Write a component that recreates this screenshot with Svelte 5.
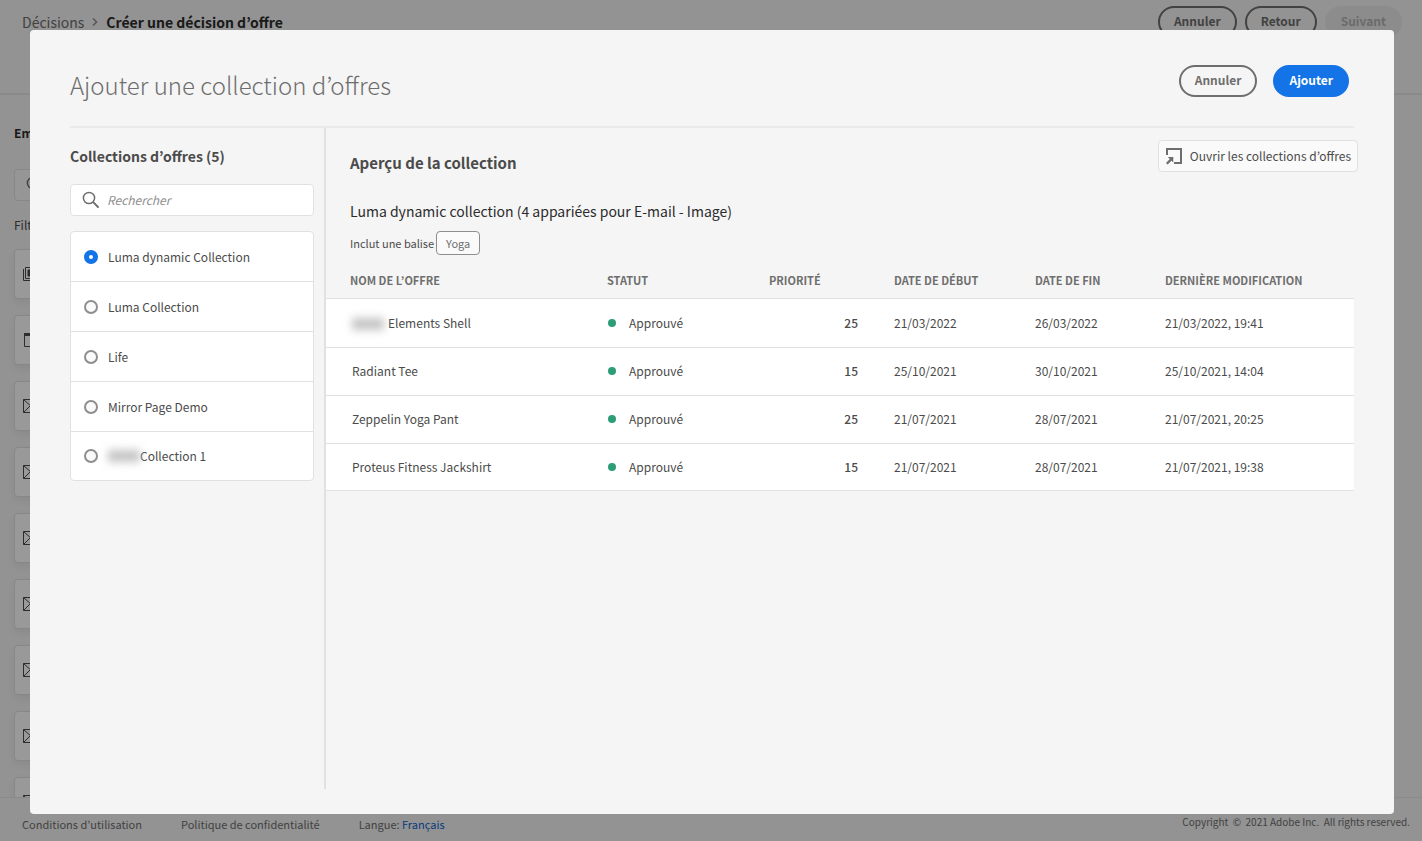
<script>
  const collections = [
    { id: 'dynamic', label: 'Luma dynamic Collection' },
    { id: 'luma', label: 'Luma Collection' },
    { id: 'life', label: 'Life' },
    { id: 'mirror', label: 'Mirror Page Demo' },
    { id: 'masked', label: 'Collection 1', masked: true },
  ];
  const offers = [
    { name: 'Elements Shell', masked: true, priority: 25, start: '21/03/2022', end: '26/03/2022', modified: '21/03/2022, 19:41' },
    { name: 'Radiant Tee', priority: 15, start: '25/10/2021', end: '30/10/2021', modified: '25/10/2021, 14:04' },
    { name: 'Zeppelin Yoga Pant', priority: 25, start: '21/07/2021', end: '28/07/2021', modified: '21/07/2021, 20:25' },
    { name: 'Proteus Fitness Jackshirt', priority: 15, start: '21/07/2021', end: '28/07/2021', modified: '21/07/2021, 19:38' },
  ];
  const placements = ['image', 'web', 'mail', 'mail', 'mail', 'mail', 'mail', 'mail', 'mail'];
  let selected = $state('dynamic');
  let query = $state('');
</script>

{#snippet magnifier()}
  <svg class="magnifier" viewBox="0 0 18 18" width="18" height="18" aria-hidden="true">
    <circle cx="7" cy="7" r="5.6" fill="none" stroke="currentColor" stroke-width="1.5" />
    <path d="M11.2 11.2 16 16" stroke="currentColor" stroke-width="1.9" stroke-linecap="round" />
  </svg>
{/snippet}

<div class="page">
  <header class="topbar">
    <nav class="crumbs">
      <a href="#decisions">Décisions</a>
      <svg viewBox="0 0 6 10" width="6" height="10" aria-hidden="true"><path d="M1 1.5 4.6 5 1 8.5" fill="none" stroke="#8e8e8e" stroke-width="1.5" /></svg>
      <strong>Créer une décision d’offre</strong>
    </nav>
    <div class="top-actions">
      <button class="pill">Annuler</button>
      <button class="pill">Retour</button>
      <button class="pill off" disabled>Suivant</button>
    </div>
  </header>
  <main class="back">
    <h2>Emplacements</h2>
    <div class="back-search">{@render magnifier()}</div>
    <p>Filtres</p>
    <ul>
      {#each placements as kind}
        <li>
          <svg viewBox="0 0 18 14" width="18" height="14" fill="none" stroke="#4b4b4b" stroke-width="1" aria-hidden="true">
            {#if kind === 'image'}
              <path d="M.5 2v11.5H15M2.500.5h15v11h-15z" /><path d="M5 3h10v6H5z" fill="#4b4b4b" />
            {:else if kind === 'web'}
              <path d="M1.500.5h15v13h-15z" /><path d="M1 1.500h16" stroke-width="3" />
            {:else}
              <path d="M.5.5h17v13H.5zM.5.5 9 8l8.500-7.500M.5 13.500 7 7M17.500 13.500 11 7" />
            {/if}
          </svg>
        </li>
      {/each}
    </ul>
  </main>
  <footer class="bottom">
    <a href="#terms">Conditions d’utilisation</a>
    <a href="#privacy">Politique de confidentialité</a>
    <span>Langue: <a class="lang" href="#language">Français</a></span>
    <small>Copyright &nbsp;©&nbsp; 2021 Adobe Inc. &nbsp;All rights reserved.</small>
  </footer>
</div>

<div class="overlay">
  <div class="dialog" role="dialog" aria-modal="true" aria-labelledby="dialog-title">
    <header class="dialog-head">
      <h1 id="dialog-title">Ajouter une collection d’offres</h1>
      <div class="dialog-actions">
        <button class="pill">Annuler</button>
        <button class="pill primary">Ajouter</button>
      </div>
    </header>
    <div class="columns">
      <aside>
        <h2>Collections d’offres (5)</h2>
        <label class="search">
          {@render magnifier()}
          <input type="search" placeholder="Rechercher" aria-label="Rechercher" bind:value={query} />
        </label>
        <div class="list" role="radiogroup" aria-label="Collections d’offres">
          {#each collections as item}
            <label>
              <input type="radio" name="collection" value={item.id} bind:group={selected} />
              <span class="label">{#if item.masked}<i class="mask"></i>{/if}{item.label}</span>
            </label>
          {/each}
        </div>
      </aside>
      <section>
        <div class="preview-head">
          <h2>Aperçu de la collection</h2>
          <button class="open">
            <svg viewBox="0 0 18 18" width="18" height="18" aria-hidden="true">
              <path d="M2 8V2h14v14H9" fill="none" stroke="#6e6e6e" stroke-width="2" />
              <path d="M2.800 10H8.300v5.500L6.500 13.700 2.600 17.400 1 15.900 4.800 12z" fill="#6e6e6e" />
            </svg>
            Ouvrir les collections d’offres
          </button>
        </div>
        <h3>Luma dynamic collection (4 appariées pour E-mail - Image)</h3>
        <div class="tags">Inclut une balise <span class="tag">Yoga</span></div>
        <table>
          <colgroup><col /><col class="c-status" /><col class="c-priority" /><col class="c-start" /><col class="c-end" /><col class="c-modified" /></colgroup>
          <thead>
            <tr><th>Nom de l’offre</th><th>Statut</th><th>Priorité</th><th>Date de début</th><th>Date de fin</th><th>Dernière modification</th></tr>
          </thead>
          <tbody>
            {#each offers as offer}
              <tr>
                <td>{#if offer.masked}<i class="mask"></i>{/if}{offer.name}</td>
                <td><i class="dot"></i>Approuvé</td>
                <td class="num">{offer.priority}</td>
                <td>{offer.start}</td>
                <td>{offer.end}</td>
                <td>{offer.modified}</td>
              </tr>
            {/each}
          </tbody>
        </table>
      </section>
    </div>
  </div>
</div>

<style>
  :global(body) { margin: 0; overflow: hidden; }
  .page, .overlay { font-family: "Noto Sans CJK KR", "Noto Sans", sans-serif; font-size: 12px; line-height: 20px; color: #4b4b4b; box-sizing: border-box; }
  .page *, .overlay * { box-sizing: border-box; }
  h1, h2, h3, p, ul { margin: 0; padding: 0; }
  button, input { font: inherit; color: inherit; }
  a { color: inherit; text-decoration: none; }

  .page { height: 100vh; display: flex; flex-direction: column; background: #f5f5f5; overflow: hidden; }
  .topbar { display: flex; justify-content: space-between; align-items: flex-start; height: 95px; flex: none; padding: 6px 20px 0 22px; border-bottom: 2px solid #e6e6e6; }
  .crumbs { display: flex; align-items: center; gap: 8px; height: 32px; font-size: 14px; color: #6e6e6e; }
  .crumbs strong { color: #2c2c2c; }
  .top-actions { display: flex; gap: 8px; }
  .pill { height: 32px; padding: 0 14px 2px; border: 2px solid #6e6e6e; border-radius: 16px; background: transparent; color: #6e6e6e; font-weight: 700; line-height: 20px; }
  .pill.off { border-color: #eaeaea; background: #eaeaea; color: #b3b3b3; }
  .pill.primary { border-color: #1473e6; background: #1473e6; color: #fff; }

  .back { flex: 1; min-height: 0; overflow: hidden; width: 320px; padding: 28px 14px 0; }
  .back h2 { font-size: 12px; line-height: 20px; color: #2c2c2c; }
  .back-search { display: flex; align-items: center; height: 32px; margin: 26px 0 14px; padding-left: 11px; border: 1px solid #e1e1e1; border-radius: 4px; background: #fafafa; }
  .back ul { display: grid; gap: 16px; margin-top: 14px; list-style: none; }
  .back li { display: flex; align-items: center; height: 50px; padding-left: 8px; border: 1px solid #e1e1e1; border-radius: 4px; background: #fff; box-shadow: 0 4px 8px rgba(0, 0, 0, 0.06); }
  .bottom { display: flex; align-items: center; gap: 39px; height: 44px; flex: none; padding: 9px 12px 0 22px; border-top: 1px solid #e6e6e6; font-size: 11px; color: #6e6e6e; }
  .bottom .lang { color: #0d66d0; }
  .bottom small { margin-left: auto; padding-bottom: 4px; font-size: 10px; line-height: 20px; }

  .overlay { position: fixed; inset: 0; display: flex; padding: 30px 28px 27px 30px; background: rgba(0, 0, 0, 0.4); }
  .dialog { flex: 1; min-width: 0; display: flex; flex-direction: column; padding: 0 40px 25px; border-radius: 4px; background: #f5f5f5; }
  .dialog-head { display: flex; justify-content: space-between; align-items: flex-start; padding: 35px 5px 0 0; height: 98px; border-bottom: 2px solid #eaeaea; }
  .dialog-head h1 { padding-top: 4px; font-size: 24px; line-height: 32px; font-weight: 300; color: #6e6e6e; }
  .dialog-actions { display: flex; gap: 16px; }
  .columns { flex: 1; min-height: 0; display: grid; grid-template-columns: 256px minmax(0, 1fr); }
  aside { padding: 18px 10px 0 0; border-right: 2px solid #e1e1e1; }
  aside h2 { font-size: 14px; line-height: 20px; font-weight: 700; }
  .magnifier { flex: none; color: #6e6e6e; }
  .search { display: flex; align-items: center; gap: 7px; height: 32px; margin: 18px 0 15px; padding: 0 11px; border: 1px solid #e1e1e1; border-radius: 4px; background: #fff; }
  .search input { flex: 1; min-width: 0; padding: 0; border: 0; outline: 0; background: transparent; }
  .search input::placeholder { color: #8e8e8e; font-style: italic; opacity: 1; }
  .list { border: 1px solid #e1e1e1; border-radius: 4px; background: #fff; }
  .list label { display: flex; align-items: center; gap: 10px; height: 50px; padding-left: 13px; border-bottom: 1px solid #e1e1e1; }
  .list label:last-child { height: 48px; border-bottom: 0; }
  .list input { appearance: none; width: 14px; height: 14px; margin: 0; border: 2px solid #8e8e8e; border-radius: 50%; background: #fafafa; }
  .list input:checked { border: 5px solid #1473e6; background: #fff; }
  .label { display: flex; align-items: center; }
  .mask { display: inline-block; width: 32px; height: 12px; background: #c4c4c4; filter: blur(4px); vertical-align: middle; }

  section { min-width: 0; }
  .preview-head { display: flex; justify-content: space-between; align-items: flex-start; padding: 12px 0 0 24px; margin-right: -4px; }
  .preview-head h2 { padding-top: 11px; font-size: 15px; line-height: 24px; font-weight: 700; color: #4b4b4b; }
  .open { display: flex; align-items: center; gap: 7px; height: 32px; padding: 0 6px; border: 1px solid #e1e1e1; border-radius: 4px; background: #fafafa; line-height: 20px; white-space: nowrap; }
  h3 { padding: 24px 0 0 24px; font-size: 14px; line-height: 24px; font-weight: 400; color: #2c2c2c; }
  .tags { display: flex; align-items: center; gap: 2px; margin-top: 8px; padding-left: 24px; font-size: 11px; }
  .tag { height: 24px; padding: 0 9px; border: 1px solid #8e8e8e; border-radius: 4px; background: #fafafa; color: #6e6e6e; line-height: 22px; }
  table { width: 100%; table-layout: fixed; border-collapse: collapse; }
  .c-status { width: 162px; }
  .c-priority { width: 125px; }
  .c-start { width: 141px; }
  .c-end { width: 130px; }
  .c-modified { width: 189px; }
  th { height: 43px; padding: 7px 0 0; text-align: left; vertical-align: middle; font-size: 11px; font-weight: 700; line-height: 16px; text-transform: uppercase; color: #6e6e6e; white-space: nowrap; }
  td { height: 48px; padding: 0; border-top: 1px solid #e1e1e1; border-bottom: 1px solid #e1e1e1; background: #fff; white-space: nowrap; }
  tr:first-child td { height: 49px; }
  tr:last-child td { height: 47px; }
  th:first-child { padding-left: 24px; }
  td:first-child { padding-left: 26px; }
  td .mask { margin-right: 4px; }
  .num { padding-right: 36px; text-align: right; font-weight: 500; }
  .dot { display: inline-block; width: 8px; height: 8px; margin: 0 13px 0 1px; border-radius: 50%; background: #2d9d78; vertical-align: 1px; }
</style>
